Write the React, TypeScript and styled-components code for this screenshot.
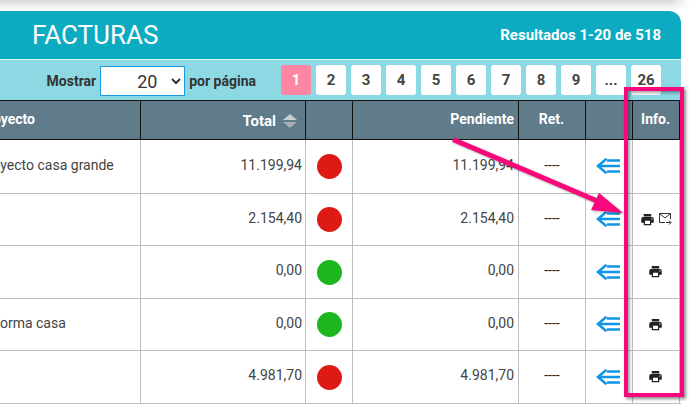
import React from "react";
import styled, { createGlobalStyle } from "styled-components";
import { MdPrint } from "react-icons/md";

const GlobalStyle = createGlobalStyle`
  html, body {
    margin: 0;
    padding: 0;
    background: #fff;
    font-family: Roboto, "Liberation Sans", sans-serif;
  }
  #root {
    width: 699px;
    height: 405px;
    overflow: hidden;
  }
`;

const Page = styled.div`
  position: relative;
  width: 699px;
  height: 405px;
  overflow: hidden;
`;

const TopShade = styled.div`
  height: 11px;
  width: 690px;
  background: linear-gradient(#d8d8d8, #efefef 55%, #fff);
  mask-image: linear-gradient(to right, #000 97%, transparent);
`;

const Panel = styled.div`
  width: 721px;
  margin-left: -40px;
  display: flex;
  flex-direction: column;
`;

const Header = styled.div`
  height: 49px;
  padding: 0 20px 0 72px;
  background: #0cabc2;
  border-top-right-radius: 12px;
  border-bottom: 1px solid #e6f7fa;
  box-sizing: border-box;
  display: flex;
  align-items: center;
  justify-content: space-between;
  color: #fff;
`;

const Title = styled.div`
  font-size: 26px;
  line-height: 30px;
`;

const Results = styled.div`
  font-size: 15px;
  font-weight: 700;
`;

const Toolbar = styled.div`
  height: 40px;
  padding: 5px 20px 0 0;
  box-sizing: border-box;
  background: #8cd9e4;
  display: flex;
  align-items: flex-start;
  justify-content: flex-end;
  color: #333;
`;

const PerPage = styled.div`
  display: flex;
  align-items: center;
  gap: 4px;
  margin: 1px 25px 0 0;
  font-size: 14px;
  font-weight: 700;
`;

const PageSelect = styled.select`
  width: 85px;
  height: 30px;
  box-sizing: border-box;
  padding: 0 0 0 32px;
  background: #fff;
  border: 1px solid #1e9be0;
  border-radius: 0;
  font-family: Roboto, "Liberation Sans", sans-serif;
  font-size: 18px;
  color: #333;
`;

const Pager = styled.div`
  display: flex;
  gap: 5px;
`;

const PageButton = styled.div<{ $active?: boolean }>`
  width: 30px;
  height: 30px;
  border-radius: 3px;
  background: ${(p) => (p.$active ? "#fc86a4" : "#fff")};
  color: ${(p) => (p.$active ? "#fff" : "#444")};
  display: flex;
  align-items: center;
  justify-content: center;
  font-size: 15px;
  font-weight: 700;
`;

const columns = "181px 165px 47px 166px 67px 47px 47px";

const HeadRow = styled.div`
  height: 40px;
  box-sizing: border-box;
  display: grid;
  grid-template-columns: ${columns};
  background: #607b89;
  border-top: 1px solid #111;
  border-bottom: 1px solid #111;
  color: #fff;
  font-size: 14px;
  font-weight: 700;
`;

const HeadCell = styled.div<{ $align?: string; $inset?: number; $trail?: number }>`
  box-sizing: border-box;
  padding: 0 ${(p) => p.$trail ?? 3}px 3px ${(p) => p.$inset ?? 3}px;
  border-right: 1px solid #111;
  display: flex;
  align-items: center;
  gap: 7px;
  justify-content: ${(p) => p.$align || "flex-start"};
`;

const TotalLabel = styled.span`
  font-size: 15px;
  margin-top: 4px;
`;

const SortIcon = styled.svg`
  width: 14px;
  height: 14px;
  flex: none;
  margin: 4px 5px 0 0;
`;

const Row = styled.div<{ $height: number }>`
  height: ${(p) => p.$height}px;
  box-sizing: border-box;
  display: grid;
  grid-template-columns: ${columns};
  border-bottom: 1px solid #bdbdbd;
  color: #444;
  font-size: 14px;
`;

const Cell = styled.div<{ $align?: string; $inset?: number; $trail?: number }>`
  box-sizing: border-box;
  padding: 0 ${(p) => p.$trail ?? 3}px 4px ${(p) => p.$inset ?? 3}px;
  border-right: 1px solid #bdbdbd;
  display: flex;
  align-items: center;
  white-space: nowrap;
  justify-content: ${(p) => p.$align || "flex-start"};
`;

const Dash = styled.span`
  color: #222;
`;

const Dot = styled.span<{ $paid: boolean }>`
  width: 25px;
  height: 25px;
  border-radius: 50%;
  margin-top: 4px;
  background: ${(p) => (p.$paid ? "#1cb61f" : "#de1a17")};
`;

const IconSlot = styled.div`
  display: flex;
  align-items: center;
  gap: 4px;
  margin: 3px 1px 0 0;
`;

const ArrowSlot = styled(IconSlot)`
  margin-right: 2px;
`;

const Overlay = styled.svg`
  position: absolute;
  left: 0;
  top: 0;
  pointer-events: none;
  filter: drop-shadow(1px 1px 1px rgba(0, 0, 0, 0.35));
`;

const Highlight = styled.div`
  position: absolute;
  left: 624px;
  top: 87px;
  width: 60px;
  height: 310px;
  box-sizing: border-box;
  border: 4px solid #f9087c;
  box-shadow: 2px 2px 3px rgba(0, 0, 0, 0.45), inset 2px 2px 3px rgba(0, 0, 0, 0.35);
`;

const BackArrow = () => (
  <svg width="24" height="16" viewBox="0 0 24 16" fill="none" stroke="#0f96e6">
    <path d="M10.5 0.8 L2 8 L10.5 15.2" strokeWidth="2.6" />
    <path d="M11 2.5 H24 M4 8 H24 M11 13.5 H24" strokeWidth="2.6" />
  </svg>
);

const MailSend = () => (
  <svg width="13" height="12" viewBox="0 0 13 12" fill="none" stroke="#333" strokeWidth="1">
    <path d="M6 9.5 H0.5 V0.5 H11.5 V6" />
    <path d="M0.5 0.5 L6 5 L11.5 0.5" />
    <path d="M7 9.5 H12 M10 7.5 L12 9.5 L10 11.5" />
  </svg>
);

const rows = [
  { height: 54, project: "Proyecto casa grande", total: "11.199,94", paid: false, pending: "11.199,94", icons: 0 },
  { height: 52, project: "", total: "2.154,40", paid: false, pending: "2.154,40", icons: 2 },
  { height: 53, project: "", total: "0,00", paid: true, pending: "0,00", icons: 1 },
  { height: 52, project: "Reforma casa", total: "0,00", paid: true, pending: "0,00", icons: 1 },
  { height: 53, project: "", total: "4.981,70", paid: false, pending: "4.981,70", icons: 1 },
];

const pages = ["1", "2", "3", "4", "5", "6", "7", "8", "9", "...", "26"];

const App: React.FC = () => {
  return (
    <Page>
      <GlobalStyle />
      <TopShade />
      <Panel>
        <Header>
          <Title>FACTURAS</Title>
          <Results>Resultados 1-20 de 518</Results>
        </Header>
        <Toolbar>
          <PerPage>
            Mostrar
            <PageSelect defaultValue="20">
              <option value="20">20</option>
            </PageSelect>
            por página
          </PerPage>
          <Pager>
            {pages.map((page, i) => (
              <PageButton key={page} $active={i === 0}>
                {page}
              </PageButton>
            ))}
          </Pager>
        </Toolbar>
        <HeadRow>
          <HeadCell $inset={19}>Proyecto</HeadCell>
          <HeadCell $align="flex-end">
            <TotalLabel>Total</TotalLabel>
            <SortIcon viewBox="0 0 14 14">
              <path d="M7 0 L14 6 H0 Z" fill="#c8cdd0" />
              <path d="M7 14 L14 8 H0 Z" fill="#a9b0b4" />
            </SortIcon>
          </HeadCell>
          <HeadCell />
          <HeadCell $align="flex-end" $trail={4}>Pendiente</HeadCell>
          <HeadCell $align="center" $trail={4}>Ret.</HeadCell>
          <HeadCell />
          <HeadCell $align="center" $trail={4}>Info.</HeadCell>
        </HeadRow>
        {rows.map((row) => (
          <Row key={row.total + row.height} $height={row.height}>
            <Cell $inset={19}>{row.project}</Cell>
            <Cell $align="flex-end">{row.total}</Cell>
            <Cell $align="center">
              <Dot $paid={row.paid} />
            </Cell>
            <Cell $align="flex-end" $trail={4}>{row.pending}</Cell>
            <Cell $align="center">
              <Dash>----</Dash>
            </Cell>
            <Cell $align="center">
              <ArrowSlot>
                <BackArrow />
              </ArrowSlot>
            </Cell>
            <Cell $align="center">
              <IconSlot>
                {row.icons > 0 && <MdPrint size={15} color="#222" />}
                {row.icons > 1 && <MailSend />}
              </IconSlot>
            </Cell>
          </Row>
        ))}
      </Panel>
      <Overlay width="699" height="405" viewBox="0 0 699 405">
        <path d="M453 139.5 L602 203" stroke="#f9087c" strokeWidth="5" />
        <path d="M623 213 L599 193 L591 210 Z" fill="#f9087c" />
      </Overlay>
      <Highlight />
    </Page>
  );
};

export default App;
